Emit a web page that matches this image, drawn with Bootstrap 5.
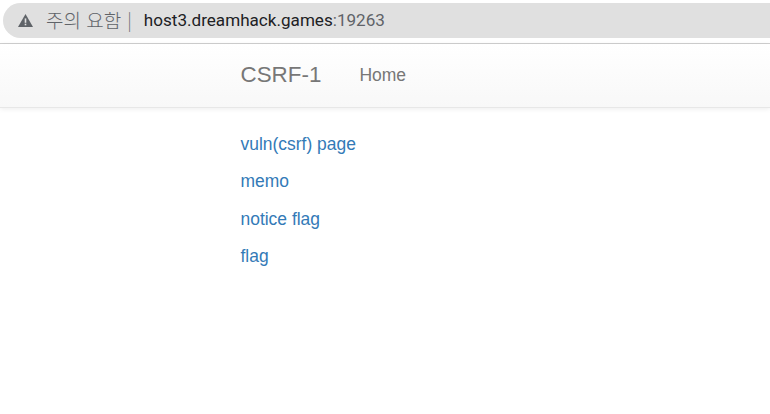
<!DOCTYPE html>
<html lang="ko"><head><meta charset="utf-8">
<link href="https://cdn.jsdelivr.net/npm/bootstrap@5.3.0/dist/css/bootstrap.min.css" rel="stylesheet">
<style>
html,body{height:414px;overflow:hidden;background:#fff}
body{font-family:"Liberation Sans",Arial,sans-serif;font-size:18px;color:#333}
.addr-wrap{height:44px;background:#fff;border-bottom:1px solid #d0d0d0;padding-top:3px}
.addr-pill{height:35px;margin-left:3px;background:#e0e0e0;border-radius:18px 0 0 18px;padding-left:15px;font-family:"Noto Sans CJK KR","Noto Sans",sans-serif;font-size:19px;font-weight:300;color:#5f6368}
.addr-warn{margin-left:13px;line-height:1;margin-top:-3px}
.addr-sep{margin:-3px 12px 0 6px;line-height:1;font-weight:300;font-size:18px;color:#6f7276}
.addr-host{color:#202124;font-family:"Roboto",sans-serif;font-size:17.1px;font-weight:400}
.addr-port{color:#5f6368;font-family:"Roboto",sans-serif;font-size:17.1px;font-weight:400}
.site-nav{height:64px;background:linear-gradient(#fff,#f8f8f8);border-bottom:1px solid #e7e7e7;box-shadow:0 1px 5px rgba(0,0,0,.075);padding:0 0 0 240.5px}
.site-brand{font-size:22.4px;color:#777;text-decoration:none;margin-top:-1px}
.site-link{font-size:17.5px;color:#777;text-decoration:none;margin-left:38px}
.page-links{padding:24px 0 0 240.5px}
.page-links a{display:block;color:#337ab7;font-size:17.45px;line-height:25px;margin-bottom:12.4px;text-decoration:none}
</style></head><body>
<div class="addr-wrap"><div class="addr-pill d-flex align-items-center">
<svg width="15" height="13" viewBox="0 0 15 13"><path d="M7.5 0 15 13H0Z" fill="#5f6368"/><rect x="6.7" y="4.4" width="1.6" height="4.4" fill="#e0e0e0"/><rect x="6.7" y="9.7" width="1.6" height="1.6" fill="#e0e0e0"/></svg>
<span class="addr-warn">주의 요함</span><span class="addr-sep">|</span><span class="addr-host">host3.dreamhack.games</span><span class="addr-port">:19263</span>
</div></div>
<nav class="site-nav d-flex align-items-center">
<a class="site-brand" href="#">CSRF-1</a><a class="site-link" href="#">Home</a>
</nav>
<div class="page-links">
<a href="#">vuln(csrf) page</a><a href="#">memo</a><a href="#">notice flag</a><a href="#">flag</a>
</div>
<script src="https://cdn.jsdelivr.net/npm/bootstrap@5.3.0/dist/js/bootstrap.bundle.min.js"></script>
</body></html>
